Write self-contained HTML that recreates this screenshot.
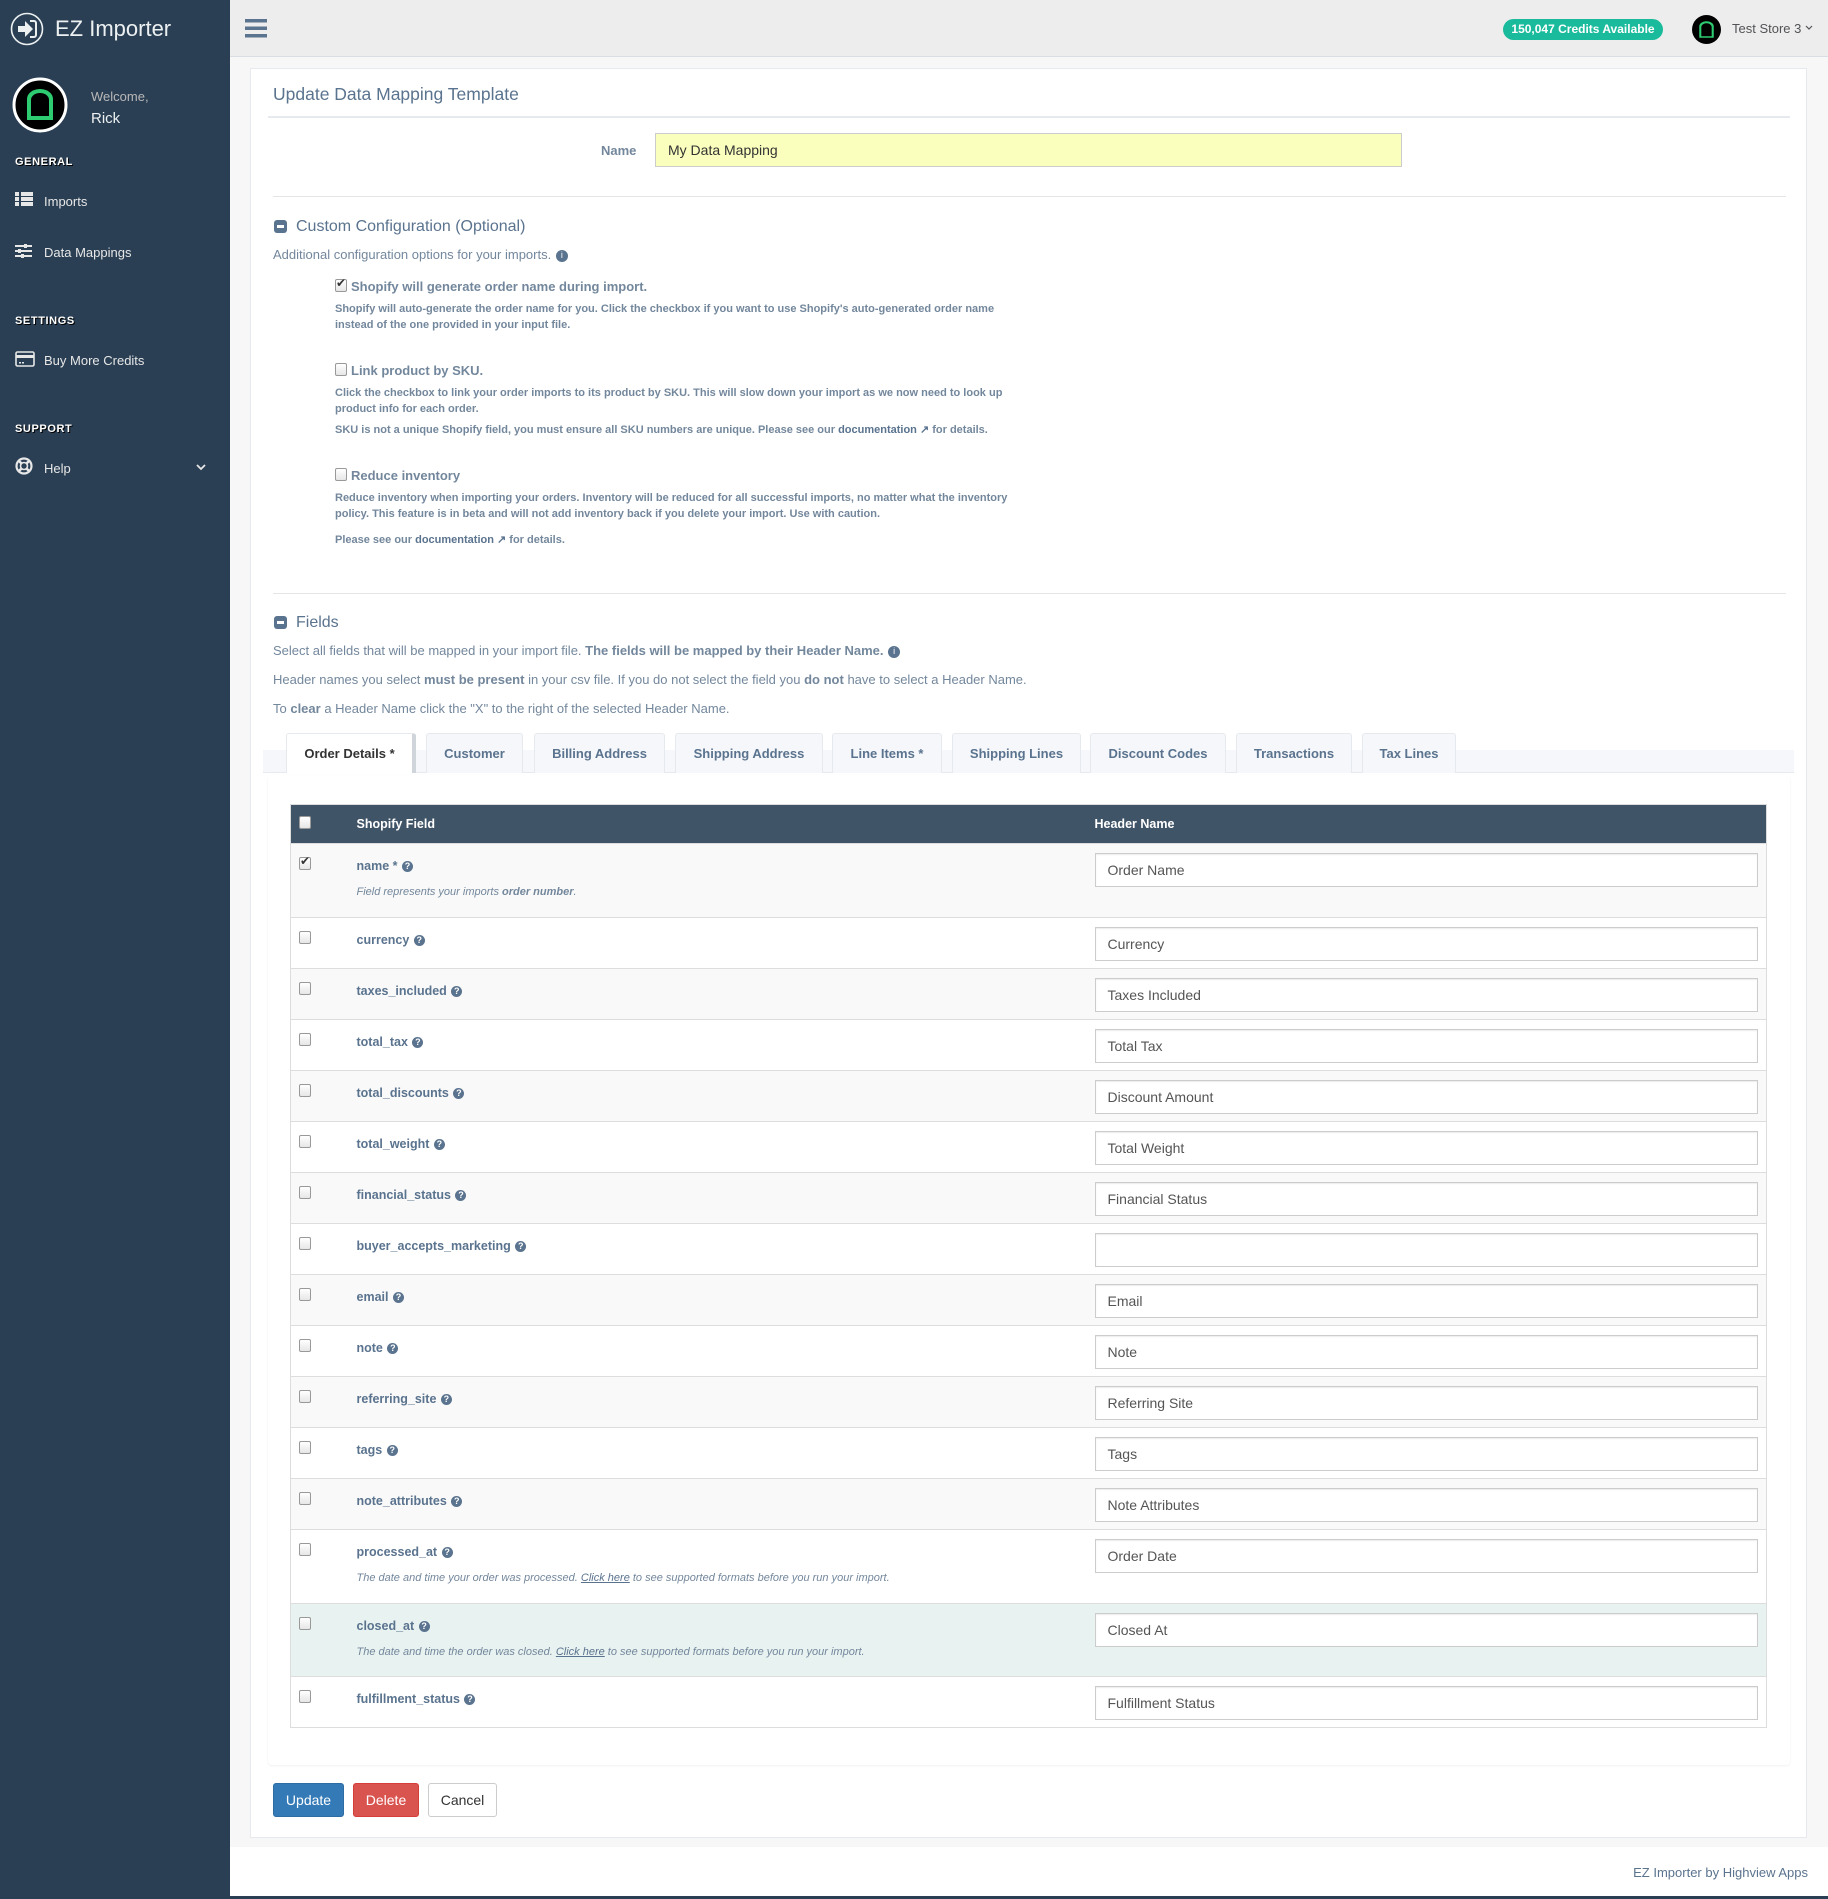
<!DOCTYPE html>
<html><head><meta charset="utf-8">
<style>
*{box-sizing:border-box;margin:0;padding:0}
body{width:1828px;height:1899px;position:relative;font-family:"Liberation Sans",Arial,sans-serif;color:#73879C;background:#fff;overflow:hidden}
.abs{position:absolute}
#side{left:0;top:0;width:230px;height:1899px;background:#2A3F54}
#top{left:230px;top:0;width:1598px;height:57px;background:#EDEDED;border-bottom:1px solid #D9DEE4}
#bg{left:230px;top:57px;width:1598px;height:1790px;background:#F7F7F7}
#botbar{left:0;top:1896px;width:1828px;height:3px;background:#2A3F54}
.side-h{color:#fff;font-weight:bold;font-size:11px;letter-spacing:.6px;left:15px;text-shadow:1px 1px #000}
.side-i{color:#E7E7E7;font-size:13px;left:44px}
.ico{position:absolute;left:15px}
#panel{left:250px;top:68px;width:1557px;height:1770px;background:#fff;border:1px solid #E6E9ED}
.t13{font-size:13px}
.desc{font-size:11px;font-weight:bold;color:#73879C;line-height:16px}
.lbl{font-size:13px;font-weight:bold;color:#73879C}
.cb{position:absolute;width:12px;height:13px;border:1px solid #999;border-radius:2px;background:linear-gradient(#fff,#e6e6e6)}
.tab{position:absolute;top:733px;height:40px;background:#F5F7FA;border:1px solid #E6E9ED;border-bottom:none;border-radius:3px 3px 0 0;font-size:13px;font-weight:bold;color:#5A738E;text-align:center;line-height:40px}
table{border-collapse:collapse;position:absolute;left:290px;top:804px;width:1477px;border:1px solid #ddd}
th{background:#405467;color:#fff;font-size:12.5px;text-align:left;height:39px;padding:0;position:relative}
td{vertical-align:top;padding:0;border-top:1px solid #ddd;position:relative}
tr.s td{background:#F9F9F9}
tr.h td{background:#E8F2F0}
.fn{font-size:12.5px;font-weight:bold;color:#5A738E;margin-top:15px;display:block}
.q{display:inline-block;width:11px;height:11px;border-radius:50%;background:#5A738E;color:#fff;font-size:9px;line-height:11px;text-align:center;vertical-align:1px;margin-left:1px}
.help{font-size:11px;font-style:italic;color:#73879C;margin-top:13px;display:block}
.help u{color:#5A738E}
.inp{margin:9px 8px 0 0;height:34px;border:1px solid #ccc;background:#fff;font-size:14px;color:#555;padding:0 12px;line-height:32px;box-shadow:inset 0 1px 1px rgba(0,0,0,.075)}
.btn{position:absolute;top:1783px;height:34px;border-radius:3px;font-size:14px;line-height:32px;text-align:center}
</style></head><body>
<div id="side" class="abs"></div>
<div id="top" class="abs"></div>
<div id="bg" class="abs"></div>

<svg class="abs" style="left:10px;top:12px" width="34" height="34" viewBox="0 0 34 34"><circle cx="17" cy="17" r="15.5" fill="none" stroke="#ECF0F1" stroke-width="1.6"/><path d="M8 14h7v-5l8 8-8 8v-5H8z" fill="#ECF0F1"/><path d="M20 9h4a2 2 0 0 1 2 2v12a2 2 0 0 1-2 2h-4" fill="none" stroke="#ECF0F1" stroke-width="2"/></svg>
<div class="abs" style="left:55px;top:16px;font-size:22px;color:#ECF0F1">EZ Importer</div>
<svg class="abs" style="left:12px;top:77px" width="56" height="56" viewBox="0 0 56 56"><circle cx="28" cy="28" r="26" fill="#000" stroke="#fff" stroke-width="3"/><path d="M15 42V22a13 10 0 0 1 26 0v20z" fill="#2ECC71"/><path d="M19 39V23a9 7 0 0 1 18 0v16z" fill="#000"/><rect x="15" y="40" width="26" height="3" fill="#2ECC71"/></svg>
<div class="abs" style="left:91px;top:89px;font-size:13px;color:#BAB8B8">Welcome,</div>
<div class="abs" style="left:91px;top:110px;font-size:15px;color:#ECF0F1">Rick</div>
<div class="abs side-h" style="top:156px">GENERAL</div>
<svg class="ico" style="top:192px" width="18" height="14"><rect x="0" y="0" width="4" height="4" fill="#E7E7E7"/><rect x="6" y="0" width="12" height="4" fill="#E7E7E7"/><rect x="0" y="5" width="4" height="4" fill="#E7E7E7"/><rect x="6" y="5" width="12" height="4" fill="#E7E7E7"/><rect x="0" y="10" width="4" height="4" fill="#E7E7E7"/><rect x="6" y="10" width="12" height="4" fill="#E7E7E7"/></svg>
<div class="abs side-i" style="top:194px">Imports</div>
<svg class="ico" style="top:244px" width="17" height="14"><g fill="#E7E7E7"><rect y="1" width="17" height="2"/><rect y="6" width="17" height="2"/><rect y="11" width="17" height="2"/><rect x="9" y="0" width="3" height="4"/><rect x="3" y="5" width="3" height="4"/><rect x="6" y="10" width="3" height="4"/></g></svg>
<div class="abs side-i" style="top:245px">Data Mappings</div>
<div class="abs side-h" style="top:315px">SETTINGS</div>
<svg class="ico" style="top:351px" width="20" height="16"><rect x="1" y="1" width="18" height="14" rx="1.5" fill="none" stroke="#E7E7E7" stroke-width="1.6"/><rect x="1" y="4" width="18" height="3" fill="#E7E7E7"/><rect x="4" y="11" width="2" height="1.5" fill="#E7E7E7"/><rect x="7" y="11" width="2" height="1.5" fill="#E7E7E7"/></svg>
<div class="abs side-i" style="top:353px">Buy More Credits</div>
<div class="abs side-h" style="top:423px">SUPPORT</div>
<svg class="ico" style="top:457px" width="18" height="18" viewBox="0 0 18 18"><circle cx="9" cy="9" r="7.5" fill="none" stroke="#E7E7E7" stroke-width="2.2"/><circle cx="9" cy="9" r="3.5" fill="none" stroke="#E7E7E7" stroke-width="1.6"/><path d="M3.5 3.5l3 3M14.5 3.5l-3 3M3.5 14.5l3-3M14.5 14.5l-3-3" stroke="#E7E7E7" stroke-width="2.6"/></svg>
<div class="abs side-i" style="top:461px">Help</div>
<svg class="abs" style="left:196px;top:464px" width="10" height="7"><path d="M1 1l4 4 4-4" fill="none" stroke="#E7E7E7" stroke-width="1.8"/></svg>

<svg class="abs" style="left:245px;top:19px" width="22" height="19"><g fill="#5A738E"><rect y="0" width="22" height="3.5"/><rect y="7.5" width="22" height="3.5"/><rect y="15" width="22" height="3.5"/></g></svg>
<div class="abs" style="left:1503px;top:19px;width:160px;height:21px;border-radius:11px;background:#1ABB9C;color:#fff;font-size:12px;font-weight:bold;text-align:center;line-height:21px">150,047 Credits Available</div>
<svg class="abs" style="left:1692px;top:15px" width="29" height="29" viewBox="0 0 56 56"><circle cx="28" cy="28" r="28" fill="#000"/><path d="M14 44V22a14 10 0 0 1 28 0v22z" fill="#2ECC71"/><path d="M18 41V23a10 7 0 0 1 20 0v18z" fill="#000"/></svg>
<div class="abs" style="left:1732px;top:21px;font-size:13px;color:#515356">Test Store 3</div>
<svg class="abs" style="left:1805px;top:25px" width="8" height="6"><path d="M1 1l3 3 3-3" fill="none" stroke="#515356" stroke-width="1.2"/></svg>

<div id="panel" class="abs"></div>
<div class="abs" style="left:273px;top:84px;font-size:17.5px;color:#5A738E">Update Data Mapping Template</div>
<div class="abs" style="left:268px;top:116px;width:1522px;height:2px;background:#E6E9ED"></div>
<div class="abs" style="left:601px;top:143px;font-size:13px;font-weight:bold;color:#73879C">Name</div>
<div class="abs" style="left:655px;top:133px;width:747px;height:34px;background:#FAFFBD;border:1px solid #ccc;font-size:14px;color:#333;line-height:32px;padding-left:12px">My Data Mapping</div>
<div class="abs" style="left:273px;top:196px;width:1513px;height:1px;background:#E5E5E5"></div>

<div class="abs" style="left:274px;top:220px;width:13px;height:13px;border-radius:3px;background:#5A738E"><div style="margin:5px 3px;height:3px;background:#fff"></div></div>
<div class="abs" style="left:296px;top:218px;font-size:16px;color:#5A738E">Custom Configuration (Optional)</div>
<div class="abs t13" style="left:273px;top:247px">Additional configuration options for your imports. <span class="q" style="width:12px;height:12px">i</span></div>

<div class="cb" style="left:335px;top:279px"></div><div class="abs" style="left:336px;top:276px;font-size:12px;color:#333">✔</div>
<div class="abs lbl" style="left:351px;top:279px">Shopify will generate order name during import.</div>
<div class="abs desc" style="left:335px;top:301px">Shopify will auto-generate the order name for you. Click the checkbox if you want to use Shopify's auto-generated order name<br>instead of the one provided in your input file.</div>

<div class="cb" style="left:335px;top:363px"></div>
<div class="abs lbl" style="left:351px;top:363px">Link product by SKU.</div>
<div class="abs desc" style="left:335px;top:385px">Click the checkbox to link your order imports to its product by SKU. This will slow down your import as we now need to look up<br>product info for each order.</div>
<div class="abs desc" style="left:335px;top:422px">SKU is not a unique Shopify field, you must ensure all SKU numbers are unique. Please see our <span style="color:#5A738E">documentation ↗</span> for details.</div>

<div class="cb" style="left:335px;top:468px"></div>
<div class="abs lbl" style="left:351px;top:468px">Reduce inventory</div>
<div class="abs desc" style="left:335px;top:490px">Reduce inventory when importing your orders. Inventory will be reduced for all successful imports, no matter what the inventory<br>policy. This feature is in beta and will not add inventory back if you delete your import. Use with caution.</div>
<div class="abs desc" style="left:335px;top:532px">Please see our <span style="color:#5A738E">documentation ↗</span> for details.</div>

<div class="abs" style="left:273px;top:593px;width:1513px;height:1px;background:#E5E5E5"></div>
<div class="abs" style="left:274px;top:616px;width:13px;height:13px;border-radius:3px;background:#5A738E"><div style="margin:5px 3px;height:3px;background:#fff"></div></div>
<div class="abs" style="left:296px;top:614px;font-size:16px;color:#5A738E">Fields</div>
<div class="abs t13" style="left:273px;top:643px">Select all fields that will be mapped in your import file. <b>The fields will be mapped by their Header Name.</b> <span class="q" style="width:12px;height:12px">i</span></div>
<div class="abs t13" style="left:273px;top:672px">Header names you select <b>must be present</b> in your csv file. If you do not select the field you <b>do not</b> have to select a Header Name.</div>
<div class="abs t13" style="left:273px;top:701px">To <b>clear</b> a Header Name click the "X" to the right of the selected Header Name.</div>

<div class="abs" style="left:263px;top:750px;width:1531px;height:23px;background:#F5F7FA;border-bottom:1px solid #E6E9ED"></div>
<div class="tab" style="left:286px;width:130px;background:#fff;color:#333;border-right:4px solid #D0D5DB">Order Details *</div>
<div class="tab" style="left:426px;width:97px">Customer</div>
<div class="tab" style="left:534px;width:131px">Billing Address</div>
<div class="tab" style="left:675px;width:148px">Shipping Address</div>
<div class="tab" style="left:832px;width:110px">Line Items *</div>
<div class="tab" style="left:952px;width:129px">Shipping Lines</div>
<div class="tab" style="left:1090px;width:136px">Discount Codes</div>
<div class="tab" style="left:1236px;width:116px">Transactions</div>
<div class="tab" style="left:1362px;width:94px">Tax Lines</div>

<div class="abs" style="left:268px;top:775px;width:1522px;height:990px;background:#fff;box-shadow:0 1px 2px rgba(0,0,0,.06);border-radius:4px"></div>

<table>
<tr><th style="width:66px"><div class="cb" style="left:8px;top:11px"></div></th><th style="width:738px">Shopify Field</th><th>Header Name</th></tr>
<tr class="s" style="height:74px"><td><div class="cb" style="left:8px;top:13px"></div><div class="abs" style="left:9px;top:10px;font-size:12px;color:#333">✔</div></td><td><span class="fn">name * <span class="q">?</span></span><span class="help">Field represents your imports <b>order number</b>.</span></td><td><div class="inp">Order Name</div></td></tr>
<tr style="height:51px"><td><div class="cb" style="left:8px;top:13px"></div></td><td><span class="fn">currency <span class="q">?</span></span></td><td><div class="inp">Currency</div></td></tr>
<tr class="s" style="height:51px"><td><div class="cb" style="left:8px;top:13px"></div></td><td><span class="fn">taxes_included <span class="q">?</span></span></td><td><div class="inp">Taxes Included</div></td></tr>
<tr style="height:51px"><td><div class="cb" style="left:8px;top:13px"></div></td><td><span class="fn">total_tax <span class="q">?</span></span></td><td><div class="inp">Total Tax</div></td></tr>
<tr class="s" style="height:51px"><td><div class="cb" style="left:8px;top:13px"></div></td><td><span class="fn">total_discounts <span class="q">?</span></span></td><td><div class="inp">Discount Amount</div></td></tr>
<tr style="height:51px"><td><div class="cb" style="left:8px;top:13px"></div></td><td><span class="fn">total_weight <span class="q">?</span></span></td><td><div class="inp">Total Weight</div></td></tr>
<tr class="s" style="height:51px"><td><div class="cb" style="left:8px;top:13px"></div></td><td><span class="fn">financial_status <span class="q">?</span></span></td><td><div class="inp">Financial Status</div></td></tr>
<tr style="height:51px"><td><div class="cb" style="left:8px;top:13px"></div></td><td><span class="fn">buyer_accepts_marketing <span class="q">?</span></span></td><td><div class="inp"></div></td></tr>
<tr class="s" style="height:51px"><td><div class="cb" style="left:8px;top:13px"></div></td><td><span class="fn">email <span class="q">?</span></span></td><td><div class="inp">Email</div></td></tr>
<tr style="height:51px"><td><div class="cb" style="left:8px;top:13px"></div></td><td><span class="fn">note <span class="q">?</span></span></td><td><div class="inp">Note</div></td></tr>
<tr class="s" style="height:51px"><td><div class="cb" style="left:8px;top:13px"></div></td><td><span class="fn">referring_site <span class="q">?</span></span></td><td><div class="inp">Referring Site</div></td></tr>
<tr style="height:51px"><td><div class="cb" style="left:8px;top:13px"></div></td><td><span class="fn">tags <span class="q">?</span></span></td><td><div class="inp">Tags</div></td></tr>
<tr class="s" style="height:51px"><td><div class="cb" style="left:8px;top:13px"></div></td><td><span class="fn">note_attributes <span class="q">?</span></span></td><td><div class="inp">Note Attributes</div></td></tr>
<tr style="height:74px"><td><div class="cb" style="left:8px;top:13px"></div></td><td><span class="fn">processed_at <span class="q">?</span></span><span class="help">The date and time your order was processed. <u>Click here</u> to see supported formats before you run your import.</span></td><td><div class="inp">Order Date</div></td></tr>
<tr class="h" style="height:73px"><td><div class="cb" style="left:8px;top:13px"></div></td><td><span class="fn">closed_at <span class="q">?</span></span><span class="help">The date and time the order was closed. <u>Click here</u> to see supported formats before you run your import.</span></td><td><div class="inp">Closed At</div></td></tr>
<tr style="height:51px"><td><div class="cb" style="left:8px;top:13px"></div></td><td><span class="fn">fulfillment_status <span class="q">?</span></span></td><td><div class="inp">Fulfillment Status</div></td></tr>
</table>

<div class="btn" style="left:273px;width:71px;background:#337AB7;border:1px solid #2E6DA4;color:#fff">Update</div>
<div class="btn" style="left:353px;width:66px;background:#D9534F;border:1px solid #D43F3A;color:#fff">Delete</div>
<div class="btn" style="left:428px;width:69px;background:#fff;border:1px solid #ccc;color:#333">Cancel</div>

<div class="abs" style="right:20px;top:1865px;font-size:13px;color:#5A738E">EZ Importer by Highview Apps</div>
<div id="botbar" class="abs"></div>
</body></html>
